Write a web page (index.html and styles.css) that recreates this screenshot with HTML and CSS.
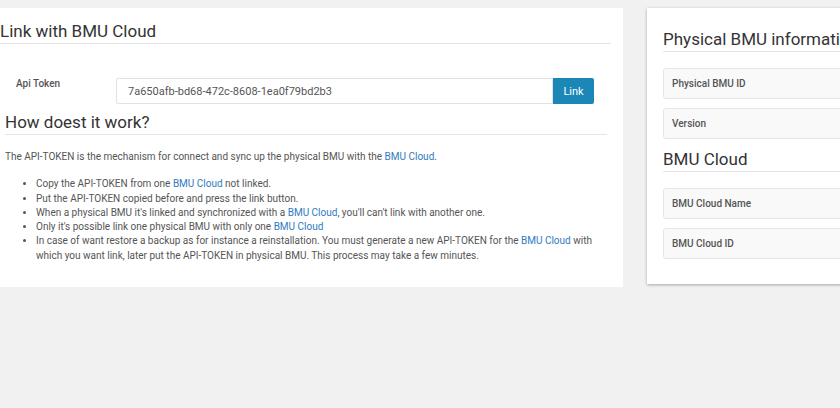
FILE: index.html
```html
<!DOCTYPE html>
<html>

<head>
    <meta charset="utf-8">
    <meta name="viewport" content="width=device-width, initial-scale=1.0">
    <title>BMU Cloud link</title>
    <link rel="stylesheet" href="styles.css">
</head>

<body>
    <div class="page">
        <div class="link-panel">
            <h3 class="panel-title">Link with BMU Cloud</h3>
            <form class="token-form">
                <label for="apiToken">Api Token</label>
                <div class="input-group">
                    <input id="apiToken" type="text" value="7a650afb-bd68-472c-8608-1ea0f79bd2b3">
                    <button type="button">Link</button>
                </div>
            </form>
            <div class="help">
                <h3 class="panel-title">How doest it work?</h3>
                <p>The API-TOKEN is the mechanism for connect and sync up the physical BMU with the <a href="#">BMU Cloud</a>.</p>
                <ul>
                    <li>Copy the API-TOKEN from one <a href="#">BMU Cloud</a> not linked.</li>
                    <li>Put the API-TOKEN copied before and press the link button.</li>
                    <li>When a physical BMU it's linked and synchronized with a <a href="#">BMU Cloud</a>, you'll can't link with another one.</li>
                    <li>Only it's possible link one physical BMU with only one <a href="#">BMU Cloud</a></li>
                    <li>In case of want restore a backup as for instance a reinstallation. You must generate a new API-TOKEN for the <a href="#">BMU Cloud</a> with which you want link, later put the API-TOKEN in physical BMU. This process may take a few minutes.</li>
                </ul>
            </div>
        </div>

        <div class="info-card">
            <h3 class="panel-title">Physical BMU information</h3>
            <div class="field">Physical BMU ID</div>
            <div class="field">Version</div>
            <h3 class="panel-title">BMU Cloud</h3>
            <div class="field">BMU Cloud Name</div>
            <div class="field">BMU Cloud ID</div>
        </div>
    </div>
</body>

</html>
```

FILE: styles.css
```css
body {
    margin: 0;
    background: #f1f1f1;
    font-family: Roboto, "Noto Sans", sans-serif;
    font-size: 10px;
    line-height: 1.42857;
    color: #555;
    overflow: hidden;
}

a {
    color: #2f7bbf;
    text-decoration: none;
}

.page {
    display: flex;
    align-items: flex-start;
    gap: 24px;
    padding-top: 8px;
}

.panel-title {
    margin: 0;
    padding-bottom: 1px;
    font-size: 17px;
    font-weight: 400;
    line-height: 22px;
    color: #333;
    border-bottom: 1px solid #e5e5e5;
}

.link-panel {
    flex: none;
    width: 623px;
    background: #fff;
    padding-bottom: 24px;
}

.link-panel > .panel-title {
    width: 611px;
    padding-top: 12px;
}

.token-form {
    display: flex;
    align-items: flex-start;
    margin: 34px 0 0;
    padding-left: 16px;
}

.token-form label {
    width: 100px;
    margin-top: -1px;
    font-weight: 500;
    color: #555;
}

.input-group {
    display: flex;
    height: 26px;
}

.input-group input {
    box-sizing: border-box;
    width: 437px;
    height: 26px;
    margin: 0;
    padding: 0 11px;
    border: 1px solid #e2e2e2;
    border-radius: 2px 0 0 2px;
    font-family: inherit;
    font-size: 11px;
    color: #555;
    outline: none;
}

.input-group button {
    width: 41px;
    height: 26px;
    margin: 0;
    padding: 0;
    border: 0;
    border-radius: 0 2px 2px 0;
    background: #1a87b6;
    color: #fff;
    font-family: inherit;
    font-size: 11px;
}

.help {
    margin-top: 7px;
    padding: 0 16px 0 5px;
}

.help p {
    margin: 15px 0 0;
}

.help ul {
    margin: 13px 0 0;
    padding-left: 31px;
}

.info-card {
    flex: none;
    width: 320px;
    background: #fff;
    padding: 20px 16px 25px;
    box-shadow: 0 1px 3px rgba(0, 0, 0, 0.3);
}

.info-card .panel-title {
    white-space: nowrap;
}

.info-card .field + .panel-title {
    margin-top: 9px;
}

.field {
    box-sizing: border-box;
    height: 31px;
    margin-top: 9px;
    padding-left: 8px;
    border: 1px solid #e6e6e6;
    border-radius: 3px;
    background: #f9f9f9;
    line-height: 29px;
    font-weight: 500;
    color: #555;
}

.panel-title + .field {
    margin-top: 16px;
}
```
